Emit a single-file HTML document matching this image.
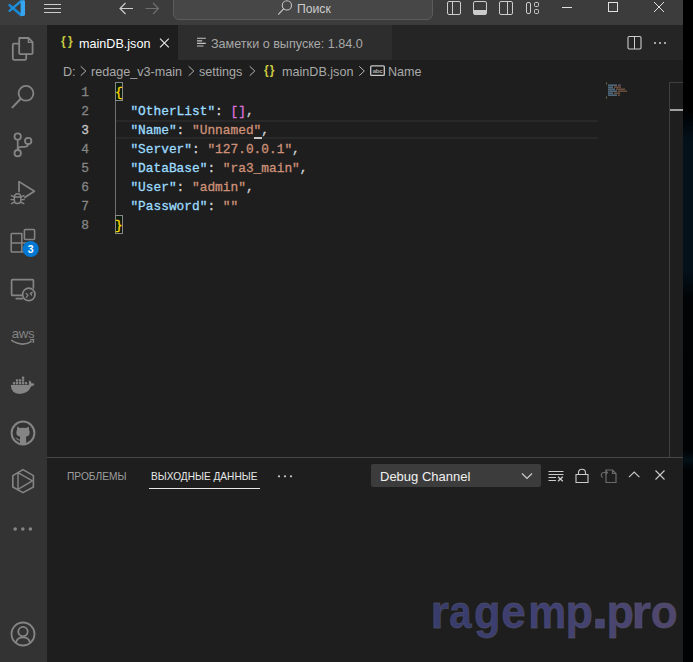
<!DOCTYPE html>
<html><head><meta charset="utf-8">
<style>
*{margin:0;padding:0;box-sizing:border-box}
html,body{width:693px;height:662px;overflow:hidden;background:#010203}
body{position:relative;font-family:"Liberation Sans",sans-serif}
.a{position:absolute}
#win{position:absolute;left:0;top:0;width:683px;height:662px;background:#1e1e1e;overflow:hidden}
svg{position:absolute;overflow:visible}
.t{position:absolute;white-space:nowrap;line-height:1}
.code{position:absolute;font-family:"Liberation Mono",monospace;font-size:12.83px;line-height:19px;white-space:pre;-webkit-text-stroke:0.3px currentColor}
.k{color:#9cdcfe}.s{color:#ce9178}.p{color:#d4d4d4}.b1{color:#ffd700}.b2{color:#da70d6}
</style></head><body>
<div class="a" style="left:683px;top:0;width:10px;height:662px;background:linear-gradient(180deg,#000000 0px,#000000 110px,#04111b 140px,#04111b 270px,#010305 300px,#010203 450px,#031018 460px,#010203 470px,#010203 662px)"></div>
<div id="win">
<!-- TITLE BAR -->
<div class="a" style="left:0;top:0;width:683px;height:25px;background:#3c3c3c"></div>
<!-- vscode logo -->
<svg style="left:0;top:0" width="40" height="25" viewBox="0 0 40 25">
  <path d="M9.6 5.2 L21 15" stroke="#1b88d6" stroke-width="2.6" stroke-linecap="round"/>
  <path d="M9.6 10.8 L21 1.2" stroke="#1f8fdc" stroke-width="2.4" stroke-linecap="round"/>
  <path d="M20.6 0.9 L23.6 0 Q25 0.3 25 1.6 V14.6 Q25 15.9 23.6 16.1 L20.6 15.7 Z" fill="#36a6f2"/>
</svg>
<!-- hamburger -->
<div class="a" style="left:44px;top:4px;width:17px;height:1px;background:#cccccc"></div>
<div class="a" style="left:44px;top:8px;width:17px;height:1px;background:#cccccc"></div>
<div class="a" style="left:44px;top:12px;width:17px;height:1px;background:#cccccc"></div>
<!-- arrows -->
<svg style="left:0;top:0" width="200" height="25">
  <path d="M120 8.5 H133 M125.5 3 L120 8.5 L125.5 14" stroke="#cccccc" stroke-width="1.2" fill="none"/>
  <path d="M145.5 8.5 H158.5 M153 3 L158.5 8.5 L153 14" stroke="#6f6f6f" stroke-width="1.2" fill="none"/>
</svg>
<!-- search box -->
<div class="a" style="left:173px;top:-10px;width:260px;height:30px;background:#474747;border:1px solid #5c5c5c;border-radius:6px"></div>
<svg style="left:0;top:0" width="300" height="25">
  <circle cx="286.9" cy="5.4" r="4.6" stroke="#c4c4c4" stroke-width="1.1" fill="none"/>
  <path d="M283.6 8.8 L278.6 14.2" stroke="#c4c4c4" stroke-width="1.2" stroke-linecap="round"/>
</svg>
<div class="t" style="left:297px;top:3px;font-size:12.2px;color:#cccccc">Поиск</div>
<!-- layout icons -->
<svg style="left:0;top:0" width="560" height="25" fill="none" stroke="#cccccc" stroke-width="1">
  <rect x="447.5" y="1.5" width="13" height="13" rx="1.5"/>
  <path d="M452.5 1.5 V14.5"/>
  <rect x="473.5" y="1.5" width="13" height="13" rx="1.5"/>
  <rect x="474" y="10" width="12" height="4.5" fill="#cccccc" stroke="none"/>
  <rect x="499.5" y="1.5" width="13" height="13" rx="1.5"/>
  <path d="M507.5 1.5 V14.5"/>
  <rect x="526.5" y="2.5" width="4" height="11" rx="1.5"/>
  <rect x="534.5" y="2.5" width="4" height="4" rx="1"/>
  <rect x="534.5" y="9.5" width="4" height="4" rx="1"/>
</svg>
<!-- window controls -->
<svg style="left:0;top:0" width="683" height="25" fill="none" stroke="#e0e0e0" stroke-width="1">
  <path d="M562 7.5 H572"/>
  <rect x="608.5" y="2.5" width="9" height="9"/>
  <path d="M654 2 L664 12 M664 2 L654 12"/>
</svg>

<!-- ACTIVITY BAR -->
<div class="a" style="left:0;top:25px;width:47px;height:637px;background:#333333"></div>
<svg style="left:0;top:0" width="47" height="662" fill="none" stroke="#858585" stroke-width="1.55" stroke-linejoin="round" stroke-linecap="round">
  <!-- explorer -->
  <path d="M19.2 38 H28.4 L32.6 42.2 V53 Q32.6 54.2 31.4 54.2 H20.4 Q19.2 54.2 19.2 53 V39.2 Q19.2 38 20.4 38 Z" stroke-width="1.8"/>
  <path d="M28.4 38.4 V42.4 H32.4" stroke-width="1.4"/>
  <path d="M19.2 43.6 H14 Q12.8 43.6 12.8 44.8 V58.6 Q12.8 59.8 14 59.8 H25 Q26.2 59.8 26.2 58.6 V54.2" stroke-width="1.8"/>
  <!-- search -->
  <circle cx="26" cy="93.3" r="7.4" stroke-width="1.8"/>
  <path d="M20.7 98.7 L12.4 107.4" stroke-width="2"/>
  <!-- scm -->
  <circle cx="17.7" cy="136.6" r="3.2" stroke-width="1.8"/>
  <circle cx="17.7" cy="153.2" r="3.2" stroke-width="1.8"/>
  <circle cx="28.2" cy="141" r="3.2" stroke-width="1.8"/>
  <path d="M17.7 139.8 V150" stroke-width="1.7"/>
  <path d="M28.2 144.2 Q27.8 146.8 25 146.8 H21.5 Q17.7 146.8 17.7 150" stroke-width="1.7"/>
  <!-- debug -->
  <path d="M19 191.4 V181.6 L34.4 191.2 L24.6 197.5" stroke-width="1.7"/>
  <path d="M14.3 197.6 Q14.3 193.8 17.6 193.8 Q20.9 193.8 20.9 197.6 V199.8 Q20.9 203.6 17.6 203.6 Q14.3 203.6 14.3 199.8 Z M14.3 197 H20.9" stroke-width="1.5"/>
  <path d="M11.4 195.6 L14 196.9 M11 199.6 H14 M11.4 203.6 L14 202.3 M23.8 195.6 L21.2 196.9 M24.2 199.6 H21.2 M23.8 203.6 L21.2 202.3" stroke-width="1.4"/>
  <!-- extensions -->
  <path d="M21.8 233.5 H12 Q11.2 233.5 11.2 234.3 V251.2 Q11.2 252 12 252 H33.8 V243 H21.8 Z M11.2 243 H21.8 V252"/>
  <rect x="24.4" y="229.4" width="10.2" height="10" rx="1"/>
  <!-- remote explorer -->
  <path d="M33.4 288 V280.6 Q33.4 279.6 32.4 279.6 H12.6 Q11.6 279.6 11.6 280.6 V294.4 Q11.6 295.4 12.6 295.4 H22" stroke-width="1.7"/>
  <path d="M16.2 298.6 H22.4" stroke-width="1.7"/>
  <circle cx="28.8" cy="294.4" r="6.2" stroke-width="1.7"/>
  <path d="M26.2 293.4 L28 295.2 L26.4 297.2 M32.2 292.4 L30.4 293.4 L31.6 295" stroke-width="1.3"/>
  <!-- hex play -->
  <path d="M23 469.6 L33.4 475.6 V487 L23 492.6 L12.8 487 V475.6 Z" stroke-width="1.6"/>
  <path d="M18 472.6 V489.6 M18.4 472.8 L32.4 480.8 L19.2 488.6" stroke-width="1.4"/>
  <!-- account -->
  <circle cx="23" cy="634" r="11.5" stroke-width="1.8"/>
  <circle cx="23" cy="631.6" r="4.7" stroke-width="1.8"/>
  <path d="M16 642.4 Q17.2 637.4 23 637.4 Q28.8 637.4 30 642.4" stroke-width="1.8"/>
</svg>
<svg style="left:0;top:0" width="47" height="662" fill="#858585" stroke="none">
  <!-- badge -->
  <circle cx="30.7" cy="249" r="8" fill="#0078d4"/>
  <text x="30.7" y="252.8" font-family="Liberation Sans" font-weight="bold" font-size="10.5" fill="#ffffff" text-anchor="middle">3</text>
  <!-- aws -->
  <g opacity="0.99"><text x="23" y="337.6" font-family="Liberation Sans" font-size="13.2" fill="#858585" text-anchor="middle" letter-spacing="-0.3">aws</text></g>
  <path d="M11.2 340.2 Q22 347.4 31.6 341.4" fill="none" stroke="#858585" stroke-width="1.5"/>
  <path d="M30 339.8 L33.6 339.4 L33.2 343" fill="none" stroke="#858585" stroke-width="1.3"/>
  <!-- docker -->
  <path d="M10.8 385 H28.8 Q28.6 381.6 29.6 380.2 Q31.4 381.6 31.6 383.4 Q33.4 383 34.6 384 Q33.6 386.4 31 386.6 Q28.2 393.9 19.6 393.9 Q11.2 393.6 10.8 385 Z"/>
  <rect x="12.9" y="382.1" width="2.3" height="2.3"/><rect x="15.9" y="382.1" width="2.3" height="2.3"/><rect x="18.9" y="382.1" width="2.3" height="2.3"/><rect x="21.9" y="382.1" width="2.3" height="2.3"/><rect x="24.9" y="382.1" width="2.3" height="2.3"/><rect x="15.9" y="379.3" width="2.3" height="2.3"/><rect x="18.9" y="379.3" width="2.3" height="2.3"/><rect x="21.9" y="379.3" width="2.3" height="2.3"/><rect x="21.9" y="376.6" width="2.3" height="2.3"/>
  <!-- github -->
  <circle cx="23" cy="433" r="11.4" fill="none" stroke="#858585" stroke-width="2"/>
  <path d="M17.3 426.6 L19.8 428.1 Q23 427.3 26.2 428.1 L28.7 426.6 Q29.2 428.8 29 430.1 Q29.7 431.2 29.7 432.4 Q29.7 436 25.8 436.8 Q26.2 437.6 26.2 438.8 V444 Q23 444.8 20 444 V440.6 Q18.2 440.8 17.1 439.5 Q16.2 438.2 15 437.8 Q16.5 437.3 17.6 438.5 Q18.6 439.6 20 439.4 V438.8 Q20 437.5 20.3 436.8 Q16.3 436 16.3 432.4 Q16.3 431.2 17 430.1 Q16.8 428.8 17.3 426.6 Z"/>
  <!-- dots -->
  <circle cx="15.2" cy="529" r="1.8"/><circle cx="22.8" cy="529" r="1.8"/><circle cx="30.4" cy="529" r="1.8"/>
</svg>

<!-- TABS -->
<div class="a" style="left:47px;top:25px;width:636px;height:35px;background:#252526"></div>
<div class="a" style="left:47px;top:25px;width:131px;height:35px;background:#1e1e1e"></div>
<div class="a" style="left:178px;top:25px;width:214px;height:35px;background:#2d2d2d"></div>
<div class="t" style="left:61px;top:35px;font-size:12px;font-weight:bold;color:#cbcb41;letter-spacing:2.4px">{}</div>
<div class="t" style="left:79px;top:37.5px;font-size:12.6px;color:#ffffff">mainDB.json</div>
<svg style="left:0;top:0" width="683" height="60" fill="none" stroke="#e6e6e6" stroke-width="1.2">
  <path d="M160 38.6 L168.8 47.4 M168.8 38.6 L160 47.4" stroke-width="1.15"/>
</svg>
<svg style="left:0;top:0" width="683" height="60" fill="none" stroke="#c4c4c4" stroke-width="1.15">
  <path d="M197 38.2 H205.8 M197 40.8 H202.2 M197 43.4 H205.8 M197 46 H203.5"/>
</svg>
<div class="t" style="left:211px;top:37.5px;font-size:12.6px;color:#a8a8a8">Заметки о выпуске: 1.84.0</div>
<svg style="left:0;top:0" width="683" height="60" fill="none" stroke="#cccccc" stroke-width="1.2">
  <rect x="628" y="36.5" width="13" height="12.5" rx="1.2" stroke-width="1.1"/>
  <path d="M634.5 36.5 V49" stroke-width="1"/>
  <circle cx="655" cy="43" r="1" fill="#cccccc" stroke="none"/>
  <circle cx="660" cy="43" r="1" fill="#cccccc" stroke="none"/>
  <circle cx="665" cy="43" r="1" fill="#cccccc" stroke="none"/>
</svg>

<!-- BREADCRUMBS -->
<div class="t" style="left:63px;top:65.5px;font-size:12.6px;color:#a9a9a9">D:</div>
<div class="t" style="left:91px;top:65.5px;font-size:12.6px;color:#a9a9a9">redage_v3-main</div>
<div class="t" style="left:199px;top:65.5px;font-size:12.6px;color:#a9a9a9">settings</div>
<div class="t" style="left:264px;top:64px;font-size:12px;font-weight:bold;color:#cbcb41;letter-spacing:1.2px">{}</div>
<div class="t" style="left:282px;top:65.5px;font-size:12.6px;color:#a9a9a9">mainDB.json</div>
<div class="t" style="left:388px;top:65.5px;font-size:12.6px;color:#a9a9a9">Name</div>
<svg style="left:0;top:0" width="683" height="85" fill="none" stroke="#b4b4b4" stroke-width="1.1">
  <path d="M80.7 66.3 L85.8 71 L80.7 75.7" stroke-width="1"/>
  <path d="M188.7 66.3 L193.8 71 L188.7 75.7" stroke-width="1"/>
  <path d="M249.7 66.3 L254.8 71 L249.7 75.7" stroke-width="1"/>
  <path d="M359.2 66.3 L364.3 71 L359.2 75.7" stroke-width="1"/>
  <rect x="370.7" y="65.8" width="13.6" height="9.6" rx="1" stroke="#c8c8c8" stroke-width="1.3"/>
  <text x="377.5" y="73" font-family="Liberation Sans" font-size="6" font-weight="bold" fill="#b0b0b0" stroke="none" text-anchor="middle" letter-spacing="-0.2">abc</text>
</svg>

<!-- EDITOR -->
<div class="a" style="left:115px;top:120px;width:483px;height:19px;border-top:2px solid #282828;border-bottom:2px solid #282828"></div>
<div class="a" style="left:115px;top:82px;width:8px;height:19px;border:1px solid #888888;background:#0c1d0e"></div>
<div class="a" style="left:115px;top:215px;width:8px;height:19px;border:1px solid #888888;background:#0c1d0e"></div>
<div class="a" style="left:115px;top:101px;width:1px;height:114px;background:#707070"></div>
<div class="a" style="left:254px;top:137px;width:8px;height:2px;background:#c8c8c8"></div>
<!-- minimap -->
<svg style="left:0;top:0" width="683" height="662" stroke="none" opacity="0.75">
  <rect x="606" y="82.5" width="1" height="2" fill="#8a8a6a"/>
  <rect x="608" y="84.5" width="9" height="1.3" fill="#6f9ab8"/><rect x="618" y="84.5" width="3" height="1.3" fill="#8a6a8a"/>
  <rect x="608" y="86.5" width="5" height="1.3" fill="#6f9ab8"/><rect x="614" y="86.5" width="7" height="1.3" fill="#9a6a50"/>
  <rect x="608" y="88.5" width="7" height="1.3" fill="#6f9ab8"/><rect x="616" y="88.5" width="9" height="1.3" fill="#9a6a50"/>
  <rect x="608" y="90.5" width="9" height="1.3" fill="#6f9ab8"/><rect x="618" y="90.5" width="9" height="1.3" fill="#9a6a50"/>
  <rect x="608" y="92.5" width="5" height="1.3" fill="#6f9ab8"/><rect x="614" y="92.5" width="6" height="1.3" fill="#9a6a50"/>
  <rect x="608" y="94.5" width="9" height="1.3" fill="#6f9ab8"/><rect x="618" y="94.5" width="2" height="1.3" fill="#9a6a50"/>
  <rect x="606" y="96.5" width="1" height="2" fill="#8a8a6a"/>
</svg>
<!-- scrollbar -->
<div class="a" style="left:669px;top:82px;width:1px;height:375px;background:#3f3f3f"></div>
<div class="a" style="left:669px;top:82px;width:14px;height:1px;background:#3f3f3f"></div>
<div class="a" style="left:670px;top:109px;width:13px;height:2px;background:#a0a0a0"></div>

<div class="code" style="left:47px;top:83px;width:42px;text-align:right;color:#858585">1
2
<span style="color:#c6c6c6">3</span>
4
5
6
7
8</div>
<div class="code" style="left:115px;top:83px"><span class="b1">{</span>
  <span class="k">"OtherList"</span><span class="p">: </span><span class="b2">[]</span><span class="p">,</span>
  <span class="k">"Name"</span><span class="p">: </span><span class="s">"Unnamed"</span><span class="p">,</span>
  <span class="k">"Server"</span><span class="p">: </span><span class="s">"127.0.0.1"</span><span class="p">,</span>
  <span class="k">"DataBase"</span><span class="p">: </span><span class="s">"ra3_main"</span><span class="p">,</span>
  <span class="k">"User"</span><span class="p">: </span><span class="s">"admin"</span><span class="p">,</span>
  <span class="k">"Password"</span><span class="p">: </span><span class="s">""</span>
<span class="b1">}</span></div>

<!-- PANEL -->
<div class="a" style="left:47px;top:457px;width:636px;height:1px;background:#474747"></div>
<div class="t" style="left:67px;top:471.5px;font-size:10.2px;color:#9d9d9d">ПРОБЛЕМЫ</div>
<div class="t" style="left:151px;top:471.5px;font-size:10.15px;color:#e7e7e7">ВЫХОДНЫЕ ДАННЫЕ</div>
<div class="a" style="left:149px;top:488px;width:111px;height:1px;background:#e7e7e7"></div>
<svg style="left:0;top:0" width="683" height="662" fill="#cccccc">
  <circle cx="279" cy="476.3" r="1.1"/><circle cx="285" cy="476.3" r="1.1"/><circle cx="291" cy="476.3" r="1.1"/>
</svg>
<div class="a" style="left:371px;top:464px;width:170px;height:22.5px;background:#3c3c3c;border-radius:2px"></div>
<div class="t" style="left:380px;top:469.5px;font-size:13px;color:#f0f0f0">Debug Channel</div>
<svg style="left:0;top:0" width="683" height="662" fill="none" stroke="#cccccc" stroke-width="1.2">
  <path d="M522 473.5 L527 478.5 L532 473.5"/>
  <path d="M548.5 471.5 H563.5 M548.5 474.5 H563.5 M548.5 477.5 H556 M548.5 480.5 H556" stroke-width="1"/><path d="M558 476.8 L562.8 481.2 M562.8 476.8 L558 481.2" stroke-width="1.3"/>
  <path d="M576 474.5 H588 V482.5 H576 Z M578.5 474.5 V472.8 Q578.5 469.2 582 469.2 Q585.5 469.2 585.5 472.8 V474.5" stroke-width="1.1"/>
  <path d="M629 477.2 L634.2 472 L639.4 477.2" stroke-width="1.1"/>
  <path d="M655.5 470.5 L664.5 479.5 M664.5 470.5 L655.5 479.5" stroke-width="1.1"/>
</svg>
<svg style="left:0;top:0" width="683" height="662" fill="none" stroke="#6a6a6a" stroke-width="1.2">
  <path d="M606 472 V482.5 H616 V473.5 L612.5 470 H606 Z M612.5 470 V473.5 H616"/>
  <path d="M607 472.5 H604 Q601.2 472.5 601.2 475.3 Q601.2 477.2 603 477.2" stroke-width="1.1"/>
  <path d="M605.5 470.3 L607.5 472.5 L605.5 474.7" stroke-width="1.1"/>
</svg>

<!-- watermark -->
<svg style="left:0;top:0" width="683" height="662">
<g font-family="Liberation Sans" font-weight="bold" font-size="47" stroke="#58586c" stroke-opacity="0.6" stroke-width="0.8">
<text transform="translate(430.56,627.5) scale(1.013,1.0)" fill="#383c6b">r</text>
<text transform="translate(449.15,627.5) scale(0.854,1.0)" fill="#393d6d">a</text>
<text transform="translate(473.96,627.5) scale(0.921,1.0)" fill="#3b3e6e">g</text>
<text transform="translate(501.13,627.5) scale(0.935,1.0)" fill="#3e3f70">e</text>
<text transform="translate(528.27,627.5) scale(0.908,1.0)" fill="#404172">m</text>
<text transform="translate(565.52,627.5) scale(0.958,1.0)" fill="#444271">p</text>
<text transform="translate(591.40,627.5) scale(1.300,1.25)" fill="#474471">.</text>
<text transform="translate(606.62,627.5) scale(0.958,1.0)" fill="#494570">p</text>
<text transform="translate(631.50,627.5) scale(1.067,1.0)" fill="#4c466f">r</text>
<text transform="translate(650.73,627.5) scale(0.936,1.0)" fill="#4f476e">o</text>
</g></svg>
</div>
</body></html>
